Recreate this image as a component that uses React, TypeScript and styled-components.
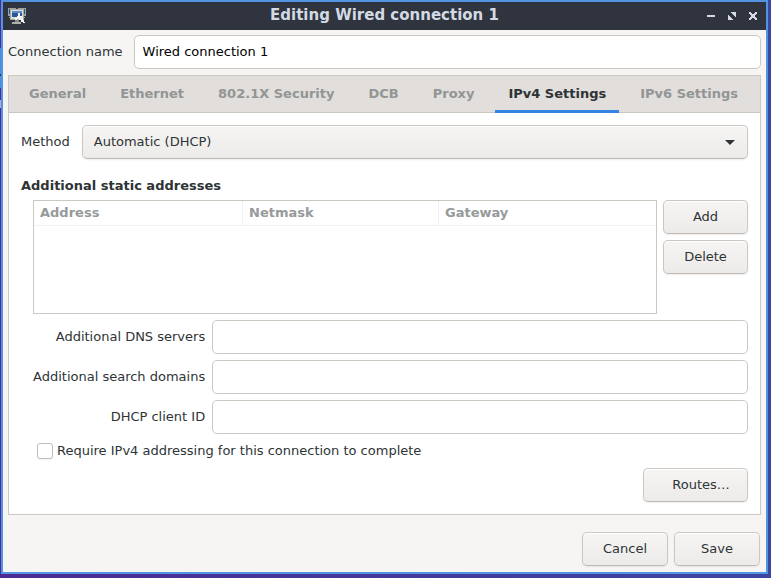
import React, { useState } from "react";
import styled, { createGlobalStyle } from "styled-components";

const GlobalStyle = createGlobalStyle`
  *, *::before, *::after { box-sizing: border-box; }
  body {
    margin: 0;
    color: #2e3436;
    font: 13px/16px "DejaVu Sans", sans-serif;
  }
  button, input, select { font: inherit; color: inherit; margin: 0; }
`;

const Desktop = styled.div`
  min-height: 100vh;
  display: flex;
  padding: 0 3px 4px 1px;
  background:
    linear-gradient(#4c2a92 48px, #4a90e2 48px 74px, #2f343f 74px 76px, #4a90e2 76px 88px, #4c2a92 88px 100px, #b9a8d8 100px 108px, #4c2a92 108px) 0 0 / 1px 100% no-repeat,
    linear-gradient(90deg, #4c2a92, #3c47a2);
`;

const Window = styled.main`
  flex: 1;
  min-width: 0;
  display: flex;
  flex-direction: column;
  border: 2px solid #5294e2;
  background: #f6f5f4;
`;

const TitleBar = styled.header`
  display: grid;
  grid-template-columns: 1fr auto 1fr;
  align-items: center;
  height: 28px;
  padding: 0 9px 0 5px;
  background: #2f343f;
  color: #d3dae3;
`;

const Title = styled.h1`
  margin: 0;
  padding: 0 0 2px 4px;
  font-size: 15px;
  line-height: 24px;
`;

const WindowControls = styled.div`
  display: flex;
  justify-content: flex-end;
  gap: 13px;
`;

const WindowButton = styled.button`
  display: flex;
  width: 8px;
  height: 8px;
  padding: 0;
  border: 0;
  background: none;
`;

const Content = styled.form`
  flex: 1;
  display: flex;
  flex-direction: column;
  padding: 5px;
`;

const FieldRow = styled.div<{ $gap: number }>`
  display: flex;
  align-items: center;
  gap: ${(p) => p.$gap}px;
`;

const TextInput = styled.input`
  flex: 1;
  min-width: 0;
  width: 100%;
  height: 34px;
  padding: 0 8px 2px;
  border: 1px solid #cdc7c2;
  border-radius: 5px;
  background: #fff;
  color: #000;
`;

const Notebook = styled.section`
  flex: 1;
  margin-top: 6px;
  border: 1px solid #cdc7c2;
  background: #fff;
`;

const Tabs = styled.div`
  display: flex;
  gap: 8px;
  padding: 0 7px;
  border-bottom: 1px solid #cdc7c2;
  background: #e1dedb;
`;

const Tab = styled.button<{ $active: boolean }>`
  height: 37px;
  margin-bottom: -1px;
  padding: 2px 13px 0;
  border: 0;
  border-bottom: 3px solid ${(p) => (p.$active ? "#3584e4" : "transparent")};
  background: none;
  color: ${(p) => (p.$active ? "#2e3436" : "#929595")};
  font-weight: bold;
  white-space: nowrap;
`;

const Panel = styled.div`
  display: flex;
  flex-direction: column;
  gap: 6px;
  padding: 12px;
`;

const SelectBox = styled.div`
  position: relative;
  flex: 1;
  height: 34px;
`;

const Select = styled.select`
  appearance: none;
  width: 100%;
  height: 34px;
  padding: 0 32px 0 11px;
  border: 1px solid #cdc7c2;
  border-bottom-color: #bfb8b1;
  border-radius: 5px;
  background: linear-gradient(#f6f5f4, #edebe9);
  box-shadow: inset 0 1px #fff, 0 1px 2px #00000012;
`;

const Caret = styled.svg`
  position: absolute;
  right: 13px;
  top: 15px;
  pointer-events: none;
`;

const Heading = styled.h2`
  margin: 12px 0 0;
  font-size: 13px;
  line-height: 17px;
`;

const Indented = styled.div`
  display: flex;
  flex-direction: column;
  gap: 6px;
  padding-left: 12px;
`;

const AddressArea = styled.div`
  display: grid;
  grid-template-columns: 1fr 85px;
  gap: 6px;
`;

const TableFrame = styled.div`
  height: 114px;
  border: 1px solid #cdc7c2;
`;

const Table = styled.table`
  width: 100%;
  table-layout: fixed;
  border-collapse: separate;
  border-spacing: 0;
`;

const HeaderCell = styled.th<{ $width?: number }>`
  width: ${(p) => (p.$width ? `${p.$width}px` : "auto")};
  height: 25px;
  padding: 0 6px;
  border-bottom: 1px solid #f2f1f0;
  color: #979a9b;
  text-align: left;
  & + & { border-left: 1px solid #f2f1f0; }
`;

const ButtonColumn = styled.div`
  display: flex;
  flex-direction: column;
  gap: 6px;
`;

const Button = styled.button<{ $width?: number; $iconSpace?: boolean }>`
  width: ${(p) => (p.$width ? `${p.$width}px` : "auto")};
  height: 34px;
  padding: 0 0 0 ${(p) => (p.$iconSpace ? "11px" : "0")};
  border: 1px solid #cdc7c2;
  border-bottom-color: #bfb8b1;
  border-radius: 5px;
  background: linear-gradient(#f6f5f4, #edebe9);
  box-shadow: inset 0 1px #fff, 0 1px 2px #00000012;
`;

const FieldGrid = styled.div`
  display: grid;
  grid-template-columns: auto 1fr;
  align-items: center;
  gap: 6px 7px;
`;

const FieldLabel = styled.label`
  text-align: right;
`;

const CheckLabel = styled.label`
  display: flex;
  align-items: center;
  gap: 4px;
  height: 22px;
  padding-left: 4px;
`;

const CheckBox = styled.input`
  appearance: none;
  width: 16px;
  height: 16px;
  border: 1px solid #c4bcb5;
  border-radius: 3px;
  background: #fff;
  box-shadow: 0 1px 1px #0000000d;
  &:checked { background: #3584e4; }
`;

const Actions = styled.div<{ $footer?: boolean }>`
  display: flex;
  justify-content: flex-end;
  gap: 6px;
  padding: ${(p) => (p.$footer ? "17px 1px 1px" : "0")};
`;

const NetworkIcon = () => (
  <svg width="18" height="18" viewBox="0 0 18 18" aria-hidden="true">
    <path d="M0 1h8v8H0zM10 1h8v8h-8zM1 10h4v1H1zM13 10h4v1h-4z" fill="#9da19c" />
    <path d="M1 2h6v5H1zM11 2h6v5h-6z" fill="#27568f" />
    <path d="M2 2h14v11H2z" fill="#a8aba5" />
    <path d="M3 3h12v9H3z" fill="#dcded8" />
    <path d="M4 4h10v6H4z" fill="#2a579a" />
    <path d="M4 4h10v2H4z" fill="#5f8cc6" />
    <path d="M7 13h4v2H7z" fill="#858984" />
    <path d="M4 15h9v2H4z" fill="#aeb1ab" />
    <path d="M10 6h2v3h2v2h1v2h1v2h1v1h-2v-1h-2v-2h-2v-1H9v1H7v-2h2V9h1z" fill="#f3f3f0" />
  </svg>
);

const MinimizeIcon = () => (
  <svg width="8" height="8" viewBox="0 0 8 8"><path d="M0 3h8v2H0z" fill="#d3dae3" /></svg>
);
const MaximizeIcon = () => (
  <svg width="8" height="8" viewBox="0 0 8 8" shapeRendering="crispEdges">
    <path d="M3 0h5v5H7V4H6V3H5V2H4V1H3zM0 3h1v1h1v1h1v1h1v1h1v1H0z" fill="#d3dae3" />
  </svg>
);
const CloseIcon = () => (
  <svg width="8" height="8" viewBox="0 0 8 8" shapeRendering="crispEdges">
    <path d="M0 0h2v1h1v1h2V1h1V0h2v2H7v1H6v2h1v1h1v2H6V7H5V6H3v1H2v1H0V6h1V5h1V3H1V2H0z" fill="#d3dae3" />
  </svg>
);

const tabs = ["General", "Ethernet", "802.1X Security", "DCB", "Proxy", "IPv4 Settings", "IPv6 Settings"];

const fields = [
  { id: "dns", label: "Additional DNS servers" },
  { id: "search", label: "Additional search domains" },
  { id: "client", label: "DHCP client ID" },
];

export default function App() {
  const [active, setActive] = useState("IPv4 Settings");
  return (
    <>
      <GlobalStyle />
      <Desktop>
        <Window>
          <TitleBar>
            <NetworkIcon />
            <Title>Editing Wired connection 1</Title>
            <WindowControls>
              <WindowButton type="button" aria-label="Minimize"><MinimizeIcon /></WindowButton>
              <WindowButton type="button" aria-label="Maximize"><MaximizeIcon /></WindowButton>
              <WindowButton type="button" aria-label="Close"><CloseIcon /></WindowButton>
            </WindowControls>
          </TitleBar>
          <Content onSubmit={(e) => e.preventDefault()}>
            <FieldRow $gap={11}>
              <label htmlFor="name">Connection name</label>
              <TextInput id="name" defaultValue="Wired connection 1" />
            </FieldRow>
            <Notebook>
              <Tabs role="tablist">
                {tabs.map((name) => (
                  <Tab
                    key={name}
                    type="button"
                    role="tab"
                    aria-selected={name === active}
                    $active={name === active}
                    onClick={() => setActive(name)}
                  >
                    {name}
                  </Tab>
                ))}
              </Tabs>
              <Panel role="tabpanel" aria-label={active}>
                <FieldRow $gap={12}>
                  <label htmlFor="method">Method</label>
                  <SelectBox>
                    <Select id="method" defaultValue="auto">
                      <option value="auto">Automatic (DHCP)</option>
                    </Select>
                    <Caret width="10" height="5" viewBox="0 0 10 5" aria-hidden="true">
                      <path d="M0 0h10L5 5z" fill="#2e3436" />
                    </Caret>
                  </SelectBox>
                </FieldRow>
                <Heading>Additional static addresses</Heading>
                <Indented>
                  <AddressArea>
                    <TableFrame>
                      <Table>
                        <thead>
                          <tr>
                            <HeaderCell $width={208}>Address</HeaderCell>
                            <HeaderCell $width={196}>Netmask</HeaderCell>
                            <HeaderCell>Gateway</HeaderCell>
                          </tr>
                        </thead>
                      </Table>
                    </TableFrame>
                    <ButtonColumn>
                      <Button type="button">Add</Button>
                      <Button type="button">Delete</Button>
                    </ButtonColumn>
                  </AddressArea>
                  <FieldGrid>
                    {fields.map((f) => (
                      <React.Fragment key={f.id}>
                        <FieldLabel htmlFor={f.id}>{f.label}</FieldLabel>
                        <TextInput id={f.id} />
                      </React.Fragment>
                    ))}
                  </FieldGrid>
                  <CheckLabel>
                    <CheckBox type="checkbox" />
                    Require IPv4 addressing for this connection to complete
                  </CheckLabel>
                  <Actions>
                    <Button type="button" $width={105} $iconSpace>Routes…</Button>
                  </Actions>
                </Indented>
              </Panel>
            </Notebook>
            <Actions $footer>
              <Button type="button" $width={86}>Cancel</Button>
              <Button type="submit" $width={86}>Save</Button>
            </Actions>
          </Content>
        </Window>
      </Desktop>
    </>
  );
}
